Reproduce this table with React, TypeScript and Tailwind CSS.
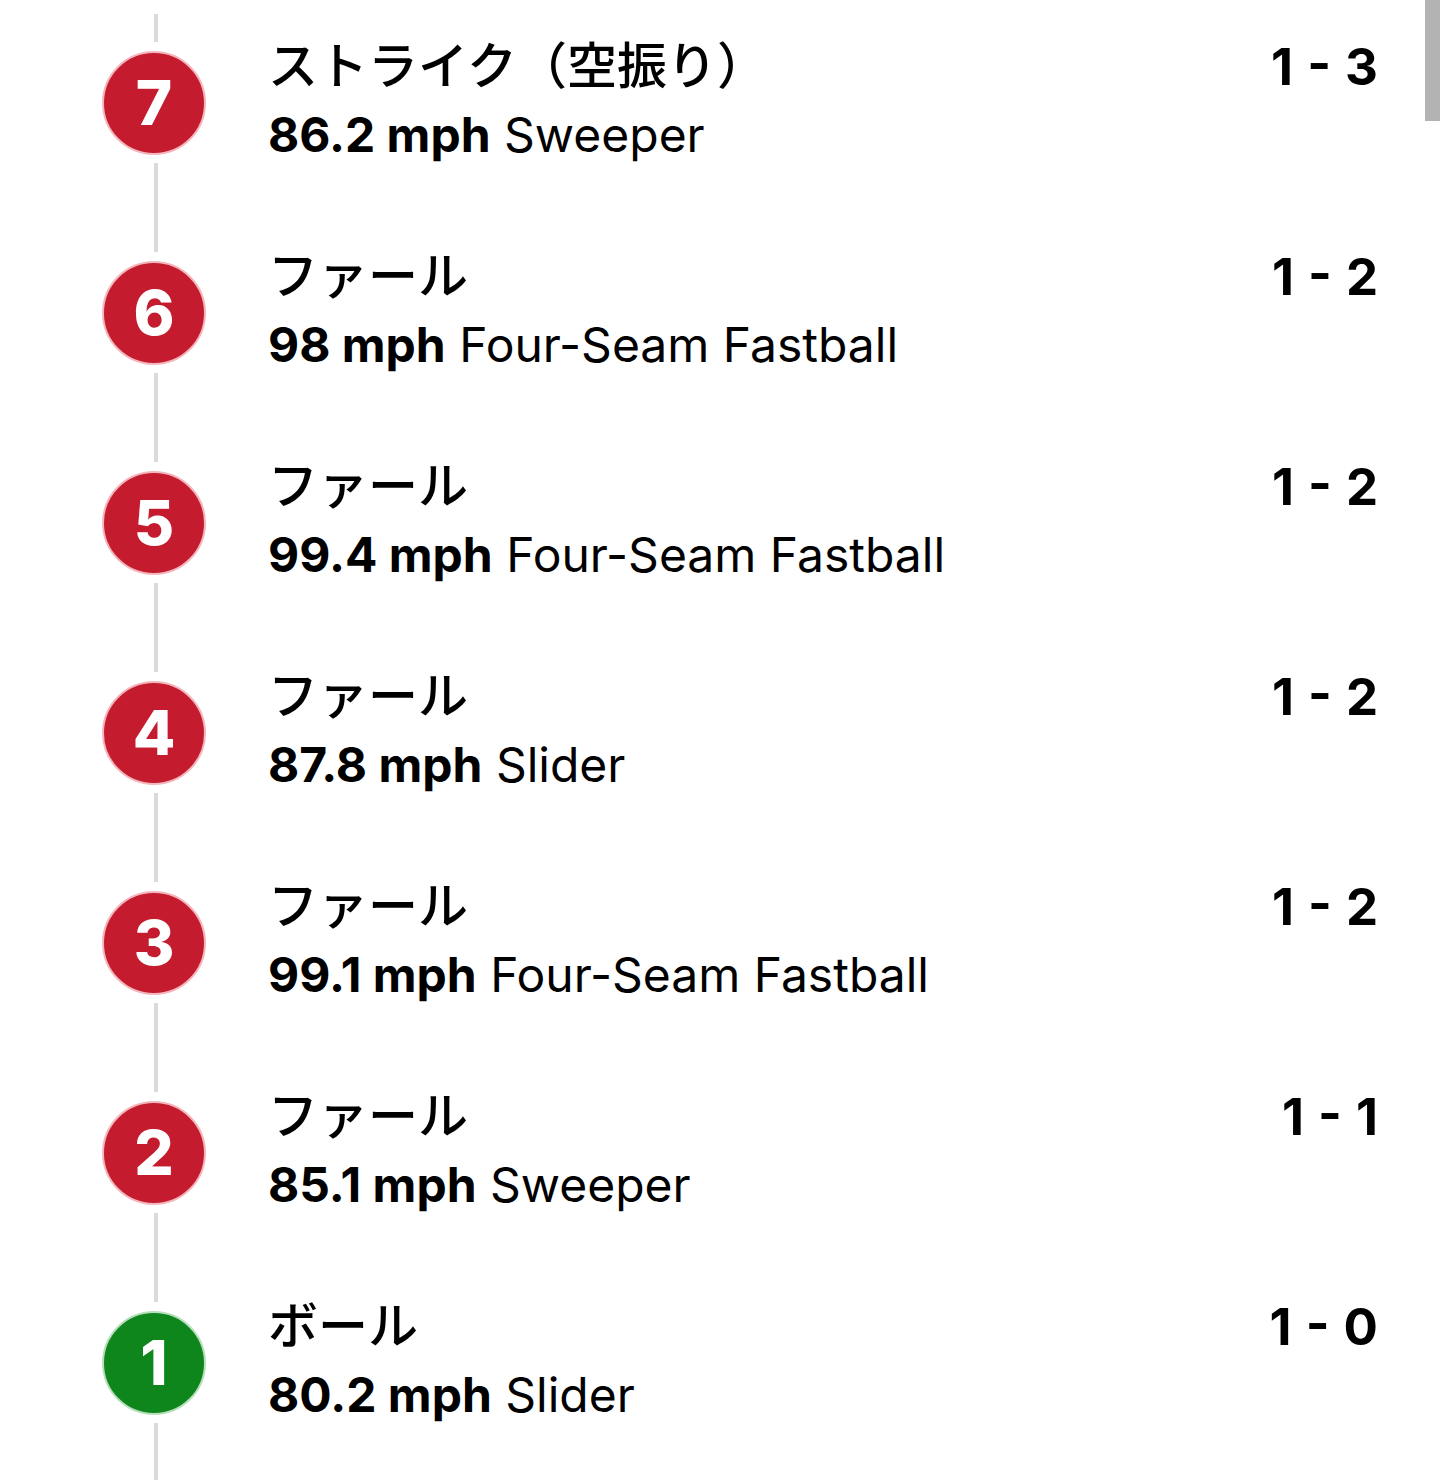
import React from "react";

type Pitch = {
  no: number;
  result: string;
  speed: string;
  pitchType: string;
  count: string;
  ball?: boolean;
};

const pitches: Pitch[] = [
  { no: 7, result: "ストライク（空振り）", speed: "86.2 mph", pitchType: "Sweeper", count: "1 - 3" },
  { no: 6, result: "ファール", speed: "98 mph", pitchType: "Four-Seam Fastball", count: "1 - 2" },
  { no: 5, result: "ファール", speed: "99.4 mph", pitchType: "Four-Seam Fastball", count: "1 - 2" },
  { no: 4, result: "ファール", speed: "87.8 mph", pitchType: "Slider", count: "1 - 2" },
  { no: 3, result: "ファール", speed: "99.1 mph", pitchType: "Four-Seam Fastball", count: "1 - 2" },
  { no: 2, result: "ファール", speed: "85.1 mph", pitchType: "Sweeper", count: "1 - 1" },
  { no: 1, result: "ボール", speed: "80.2 mph", pitchType: "Slider", count: "1 - 0", ball: true },
];

const latin = "font-['Inter','Noto_Sans_CJK_JP',sans-serif]";
const jp = "font-['Noto_Sans_CJK_JP','Inter',sans-serif]";

const PitchRow = ({ p, first }: { p: Pitch; first: boolean }) => {
  return (
    <div className="flex h-[210px]">
      <div className={`flex w-[104px] flex-col ${first ? "pt-[18px]" : ""}`}>
        <div className={`mb-[9px] ml-[52px] w-[4px] bg-[#dadada] ${first ? "h-[28px]" : "h-[46px]"}`} />
        <div
          className={`flex h-[104px] w-[104px] items-center justify-center rounded-full border-2 ${
            p.ball ? "border-[#b7dfbb] bg-[#0f861c]" : "border-[#f4b6bd] bg-[#c41c2e]"
          }`}
        >
          <span className={`${latin} text-[62px] font-extrabold leading-none text-white`}>{p.no}</span>
        </div>
        <div className="mt-[8px] ml-[52px] w-[4px] flex-1 bg-[#dadada]" />
      </div>
      <div className="ml-[62px] flex flex-1 flex-col pr-[62px] pt-[34px] text-black">
        <div className="flex items-start justify-between">
          <span className={`${jp} text-[50px] font-medium leading-[64px]`}>{p.result}</span>
          <span className={`${latin} mt-[7px] text-[51px] font-bold leading-[60px] [word-spacing:2px]`}>
            {p.count}
          </span>
        </div>
        <div className={`${latin} mt-[8px] text-[48px] leading-[60px]`}>
          <span className="font-bold">{p.speed}</span> {p.pitchType}
        </div>
      </div>
    </div>
  );
};

export default function App() {
  return (
    <div className="relative min-h-[1480px] w-[1440px] overflow-hidden bg-white">
      <div className="mt-[-4px] flex flex-col pl-[102px]">
        {pitches.map((p, i) => (
          <PitchRow key={p.no} p={p} first={i === 0} />
        ))}
        <div className="ml-[52px] h-[40px] w-[4px] bg-[#dadada]" />
      </div>
      <div className="absolute right-0 top-0 h-[121px] w-[15px] bg-[#b3b3b3]" />
    </div>
  );
}
